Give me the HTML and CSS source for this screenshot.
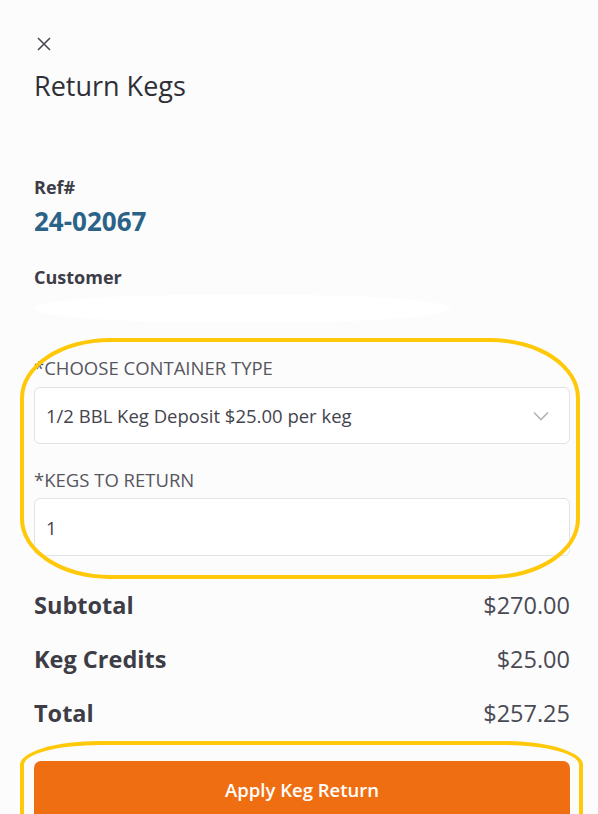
FILE: index.html
```html
<!DOCTYPE html>
<html lang="en">
<head>
    <meta charset="UTF-8">
    <meta name="viewport" content="width=device-width, initial-scale=1.0">
    <title>Return Kegs</title>
    <link rel="stylesheet" href="styles.css">
</head>
<body>

    <div class="panel">
        <button class="close-btn" aria-label="Close">
            <svg width="14" height="14" viewBox="0 0 14 14">
                <path d="M1 1 L13 13 M13 1 L1 13" stroke="#4a4a52" stroke-width="1.6" fill="none"/>
            </svg>
        </button>
        <h2 class="title">Return Kegs</h2>

        <div class="info-label">Ref#</div>
        <div class="ref-value">24-02067</div>

        <div class="info-label customer-label">Customer</div>
        <div class="redacted"></div>

        <div class="form-area">
            <div class="highlight highlight-form"></div>

            <label class="field-label" for="container">*Choose Container Type</label>
            <div class="select-box" id="container">
                <span>1/2 BBL Keg Deposit $25.00 per keg</span>
                <svg width="16" height="10" viewBox="0 0 16 10">
                    <path d="M1 1.5 L8 8.5 L15 1.5" stroke="#b4b4b8" stroke-width="1.6" fill="none"/>
                </svg>
            </div>

            <label class="field-label second" for="kegs">*Kegs to Return</label>
            <div class="input-box" id="kegs">1</div>
        </div>

        <div class="totals">
            <div class="total-row">
                <span class="total-name">Subtotal</span>
                <span class="total-amount">$270.00</span>
            </div>
            <div class="total-row">
                <span class="total-name">Keg Credits</span>
                <span class="total-amount">$25.00</span>
            </div>
            <div class="total-row">
                <span class="total-name">Total</span>
                <span class="total-amount">$257.25</span>
            </div>
        </div>

        <div class="action-area">
            <div class="highlight highlight-btn"></div>
            <button class="btn">Apply Keg Return</button>
        </div>
    </div>

</body>
</html>
```

FILE: styles.css
```css
body {
    font-family: 'Open Sans', 'Noto Sans', sans-serif;
    background-color: #fcfcfc;
    color: #3d3d47;
    margin: 0;
    height: 814px;
    overflow: hidden;
}
.panel {
    padding: 37px 28px 0 34px;
}
.close-btn {
    display: block;
    background: none;
    border: none;
    padding: 0;
    margin-left: 3px;
    width: 14px;
    height: 14px;
    cursor: pointer;
}
.close-btn svg {
    display: block;
}
.title {
    font-size: 27px;
    line-height: 32px;
    font-weight: 400;
    color: #2f2f38;
    margin: 19px 0 0 0;
}
.info-label {
    font-size: 18px;
    line-height: 24px;
    font-weight: 700;
    color: #3d3d47;
    margin-top: 73px;
}
.ref-value {
    font-size: 26px;
    line-height: 32px;
    font-weight: 700;
    color: #2b6287;
    margin-top: 6px;
}
.customer-label {
    margin-top: 28px;
}
.redacted {
    height: 27px;
    margin-top: 6px;
    margin-right: 120px;
    background: #ffffff;
    border-radius: 40% / 50%;
}
.form-area {
    position: relative;
    margin-top: 34px;
}
.field-label {
    display: block;
    font-size: 18.5px;
    line-height: 24px;
    font-weight: 400;
    text-transform: uppercase;
    color: #565660;
}
.field-label.second {
    margin-top: 24px;
}
.select-box, .input-box {
    display: flex;
    align-items: center;
    justify-content: space-between;
    box-sizing: border-box;
    height: 57px;
    margin-top: 7px;
    padding: 0 20px 0 11px;
    background: #fff;
    border: 1px solid #e2e2e4;
    border-radius: 6px;
    font-size: 18.5px;
    color: #44444e;
}
.input-box {
    height: 58px;
    margin-top: 6px;
}
.highlight {
    position: absolute;
    border: 4px solid #ffc808;
    pointer-events: none;
}
.highlight-form {
    left: -14px;
    right: -10px;
    top: -18px;
    bottom: -23px;
    border-radius: 90px / 60px;
}
.totals {
    margin-top: 34px;
}
.total-row {
    display: flex;
    justify-content: space-between;
    align-items: baseline;
    font-size: 23.5px;
    line-height: 30px;
    margin-bottom: 24px;
}
.total-row:last-child {
    margin-bottom: 0;
}
.total-name {
    font-weight: 700;
    color: #3d3d47;
}
.total-amount {
    color: #4a4a54;
}
.action-area {
    position: relative;
    margin-top: 33px;
}
.highlight-btn {
    left: -14px;
    right: -13px;
    top: -20px;
    bottom: 0;
    border-bottom: none;
    border-radius: 80px 80px 0 0 / 24px 24px 0 0;
}
.btn {
    display: block;
    width: 100%;
    height: 54px;
    background-color: #f06e12;
    color: #fff;
    border: none;
    border-radius: 7px 7px 0 0;
    font-family: inherit;
    font-size: 18.5px;
    font-weight: 600;
    padding-top: 4px;
    cursor: pointer;
}
```
